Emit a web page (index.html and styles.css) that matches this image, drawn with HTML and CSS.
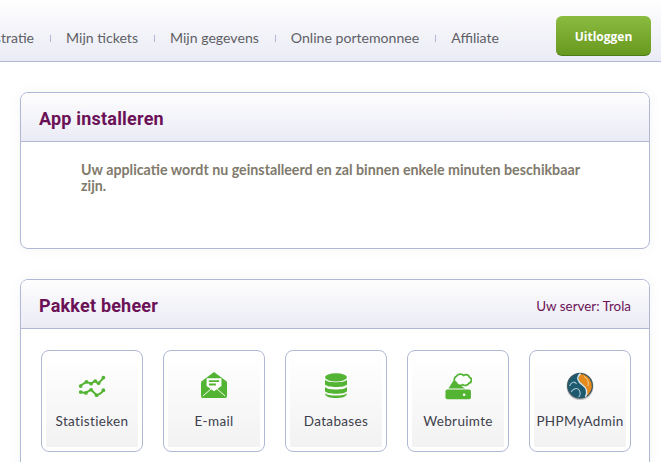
FILE: index.html
```html
<!DOCTYPE html>
<html lang="nl">
<head>
<meta charset="utf-8">
<title>App installeren</title>
<link rel="stylesheet" href="styles.css">
</head>
<body>
<header class="topbar">
  <nav class="nav">
    <a class="nav-item">Administratie</a>
    <a class="nav-item">Mijn tickets</a>
    <a class="nav-item">Mijn gegevens</a>
    <a class="nav-item">Online portemonnee</a>
    <a class="nav-item">Affiliate</a>
  </nav>
  <a class="logout">Uitloggen</a>
</header>
<main class="content">
  <section class="panel">
    <div class="panel-head"><h2 class="panel-title">App installeren</h2></div>
    <div class="panel-body message-body">
      <p class="message">Uw applicatie wordt nu geinstalleerd en zal binnen enkele minuten beschikbaar zijn.</p>
    </div>
  </section>
  <section class="panel">
    <div class="panel-head">
      <h2 class="panel-title">Pakket beheer</h2>
      <span class="server">Uw server: Trola</span>
    </div>
    <div class="panel-body tiles">
      <a class="tile"><span class="tile-inner">
        <svg class="icon" viewBox="0 0 28 28"><g transform="translate(1 3) scale(.93 .92)"><g fill="none" stroke="#53b332" stroke-width="2.100"><path d="M1 12 L8 7.500 L13 9.500 L17 6.500 L21 9 L27 2.500"/><path d="M1 18.500 L7 19.500 L13 16 L19 22 L23 20 L27 16.500"/></g><g fill="#53b332"><circle cx="1.800" cy="12" r="2"/><circle cx="8" cy="7.500" r="2"/><circle cx="13" cy="9.500" r="2"/><circle cx="17.500" cy="6.500" r="2"/><circle cx="21" cy="9" r="2"/><circle cx="26.200" cy="2.800" r="2"/><circle cx="1.800" cy="18.500" r="2"/><circle cx="7.500" cy="19.500" r="2"/><circle cx="13" cy="16" r="2"/><circle cx="19" cy="22" r="2"/><circle cx="26.200" cy="16.500" r="2"/></g></g></svg>
        <span class="tile-label">Statistieken</span></span></a>
      <a class="tile"><span class="tile-inner">
        <svg class="icon" viewBox="0 0 28 28"><g transform="translate(1 0) scale(.93 .96)"><path fill="#53b332" d="M14 0 L27 9.500 Q28 10.200 28 11.500 V25 Q28 27 26 27 H2 Q0 27 0 25 V11.500 Q0 10.200 1 9.500 Z"/><path fill="#fff" d="M6 6.500 H22 V14.500 L14 20 L6 14.500 Z"/><path fill="none" stroke="#fff" stroke-width="1" d="M2 25 L11 17.500 M26 25 L17 17.500"/><path fill="#53b332" d="M8.500 8.500 H19.500 V10.500 H8.500 Z M8.500 12 H16 V14 H8.500 Z"/></g></svg>
        <span class="tile-label">E-mail</span></span></a>
      <a class="tile"><span class="tile-inner">
        <svg class="icon" viewBox="0 0 28 28"><g fill="#53b332" transform="translate(2 1) scale(1 .96)"><ellipse cx="12" cy="4.500" rx="11" ry="4.300"/><path d="M1 7 C3 10.500 21 10.500 23 7 V12 C21 15.500 3 15.500 1 12 Z"/><path d="M1 14.500 C3 18 21 18 23 14.500 V19 C21 22.500 3 22.500 1 19 Z"/><path d="M1 21 C3 24.200 21 24.200 23 21 C23 24.500 18 26 12 26 C6 26 1 24.500 1 21 Z"/></g></svg>
        <span class="tile-label">Databases</span></span></a>
      <a class="tile"><span class="tile-inner">
        <svg class="icon" viewBox="0 0 28 28"><g transform="translate(.5 1) scale(.98 .97)"><path fill="#53b332" d="M9 8 L21 16 H4 Z"/><path fill="#53b332" d="M3 17 H25 Q27 17 27 19 V25 Q27 27 25 27 H3 Q1 27 1 25 V19 Q1 17 3 17 Z"/><circle cx="20" cy="22.500" r="1.300" fill="#fff"/><path fill="#fff" stroke="#53b332" stroke-width="1.800" d="M12 3.500 C14 0.500 18 0.500 19.500 2.500 C22 0.800 25 2 25.500 4.500 C28.500 5.500 28 10 25 10.500 C24 13 20 13.500 18.500 12 C16 13.500 12.500 12.500 12 10 C9 9 9.500 4.500 12 3.500 Z"/></g></svg>
        <span class="tile-label">Webruimte</span></span></a>
      <a class="tile"><span class="tile-inner">
        <svg class="icon" viewBox="0 0 28 28"><circle cx="14" cy="14.800" r="13.500" fill="#c6c9ca"/><circle cx="14" cy="13.800" r="13" fill="#3d5560"/><circle cx="14" cy="13.800" r="11.800" fill="#1d5a70"/><path fill="#e58a1c" d="M14 2 A11.800 11.800 0 0 1 20 24 C22 19 21 16 17 13 C13 10 11 6 14 2 Z"/><path fill="none" stroke="#dce8ec" stroke-width="1.400" d="M14.500 1.500 C10 5.500 11.500 9.500 16.500 13 C21.500 16.500 22 20 19.500 25"/><path fill="none" stroke="#9fbfcb" stroke-width="1.100" d="M3.500 14 C5.500 9.500 9 9 10.500 12 M5 20 C8 15.500 12.500 15 14 20 C14.500 22 14 24 12.500 25"/><path fill="none" stroke="#f6cf9a" stroke-width="1" d="M18 4.500 C21.500 6.500 23 10 22 14"/></svg>
        <span class="tile-label">PHPMyAdmin</span></span></a>
    </div>
  </section>
</main>
</body>
</html>
```
FILE: styles.css
```css
* { box-sizing: border-box; }
html, body { margin: 0; height: 462px; overflow: hidden; background: #fff; }
body { font-family: Lato, "Liberation Sans", sans-serif; }

.topbar {
  height: 62px;
  display: flex;
  justify-content: flex-end;
  align-items: flex-start;
  padding: 16px 10px 0 0;
  background: linear-gradient(#fefefe, #eaebf5);
  border-bottom: 1px solid #b0b8d6;
  overflow: hidden;
}
.nav { display: flex; flex: none; align-items: center; height: 43px; margin-right: 57px; }
.nav-item {
  position: relative;
  color: #5f5f66;
  font-size: 14.100px;
  line-height: 18px;
  white-space: nowrap;
  padding: 0 16px;
}
.nav-item:last-child { padding-right: 0; }
.nav-item + .nav-item::before {
  content: "";
  position: absolute;
  left: 0;
  top: 6px;
  width: 1px;
  height: 7px;
  background: #b0b8d6;
}
.logout {
  flex: none;
  width: 95px;
  height: 40px;
  text-align: center;
  color: #fff;
  font: bold 12px/42px "Open Sans", sans-serif;
  background: linear-gradient(#8bbb3f, #68991f);
  border-bottom: 1px solid #4e7d15;
  border-radius: 6px;
}

.content { padding: 30px 11px 0 20px; display: flex; flex-direction: column; gap: 30px; }
.panel {
  border: 1px solid #b0b8d6;
  border-radius: 8px;
  background: #fff;
  box-shadow: 0 0 12px rgba(120, 110, 130, 0.07);
}
.panel-head {
  height: 49px;
  display: flex;
  justify-content: space-between;
  align-items: center;
  padding: 3px 18px 0;
  background: linear-gradient(#fefefe, #eaebf5);
  border-bottom: 1px solid #b0b8d6;
  border-radius: 7px 7px 0 0;
}
.panel-title {
  margin: 0;
  color: #6b1257;
  font: bold 18px/24px Roboto, sans-serif;
  letter-spacing: 0.2px;
}
.server { color: #6b1257; font-size: 13.400px; }
.message-body { height: 106px; padding: 20px 60px; }
.message {
  margin: 0;
  color: #7f7a6c;
  font-size: 14.250px;
  font-weight: bold;
  line-height: 16px;
}
.tiles { display: flex; gap: 20px; padding: 21px 18px 0 20px; height: 160px; }
.tile {
  flex: none;
  width: 102px;
  height: 102px;
  padding: 4px;
  border: 1px solid #b0b8d6;
  border-radius: 8px;
  background: #fff;
}
.tile-inner {
  height: 100%;
  display: flex;
  flex-direction: column;
  align-items: center;
  background: linear-gradient(#fff, #f2f2f2);
}
.icon { width: 28px; height: 28px; margin-top: 17px; }
.tile-label {
  margin-top: 12px;
  color: #3d3f4c;
  font-size: 13.500px;
  line-height: 18px;
  letter-spacing: 0.35px;
  white-space: nowrap;
}
```
